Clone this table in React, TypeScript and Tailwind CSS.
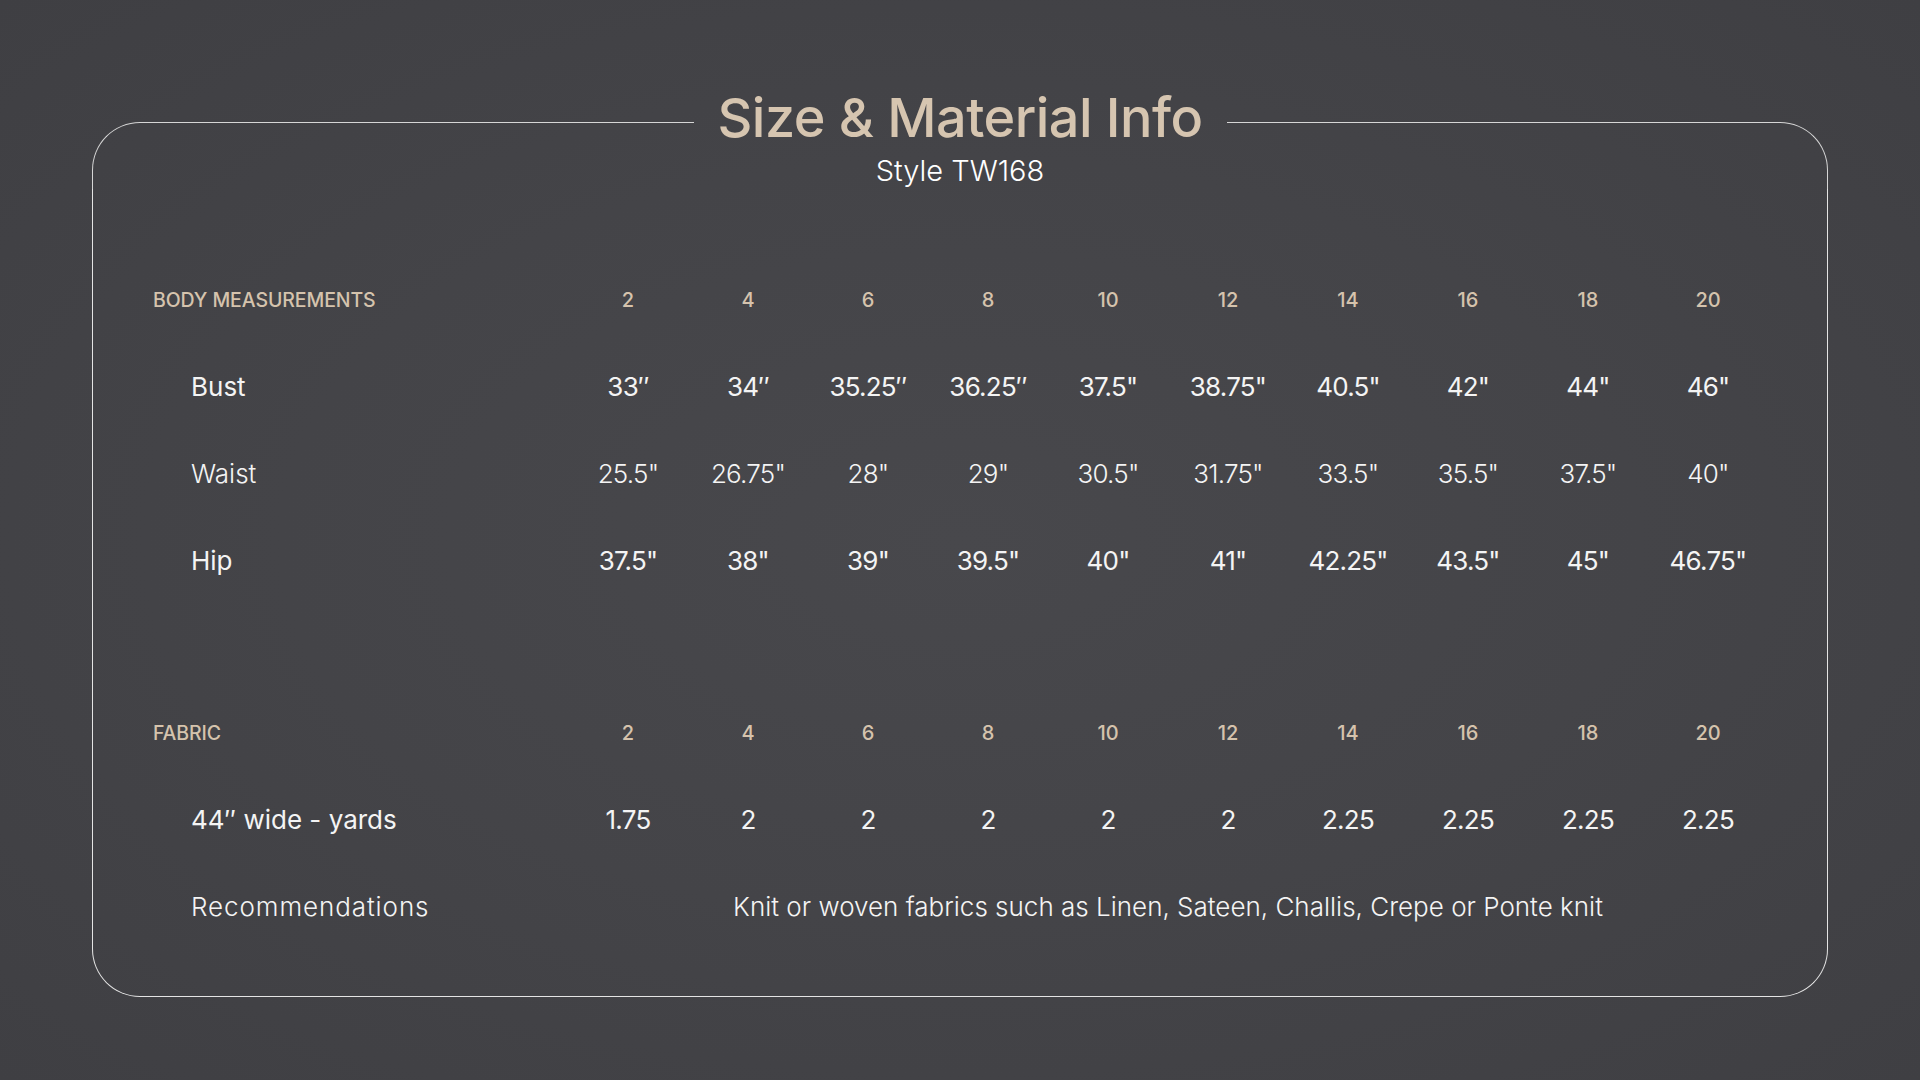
const sizes = ["2", "4", "6", "8", "10", "12", "14", "16", "18", "20"];

const bodyRows = [
  {
    label: "Bust",
    weight: "font-normal",
    values: ["33″", "34″", "35.25″", "36.25″", '37.5"', '38.75"', '40.5"', '42"', '44"', '46"'],
  },
  {
    label: "Waist",
    weight: "font-light",
    values: ['25.5"', '26.75"', '28"', '29"', '30.5"', '31.75"', '33.5"', '35.5"', '37.5"', '40"'],
  },
  {
    label: "Hip",
    weight: "font-normal",
    values: ['37.5"', '38"', '39"', '39.5"', '40"', '41"', '42.25"', '43.5"', '45"', '46.75"'],
  },
];

const yards = ["1.75", "2", "2", "2", "2", "2", "2.25", "2.25", "2.25", "2.25"];

function HeaderRow({ title }: { title: string }) {
  return (
    <>
      <div className="flex h-[86.6px] items-center text-[19.5px] font-medium uppercase tracking-[-0.005em] text-[#d5c3ad]">
        {title}
      </div>
      {sizes.map((s) => (
        <div
          key={s}
          className="flex h-[86.6px] items-center justify-center text-[20px] font-medium text-[#d5c3ad]"
        >
          {s}
        </div>
      ))}
    </>
  );
}

function ValueRow({ label, values, weight }: { label: string; values: string[]; weight: string }) {
  return (
    <>
      <div className={`flex h-[86.6px] items-center pl-[38px] text-[26px] text-[#f4f4f4] ${weight}`}>
        {label}
      </div>
      {values.map((v, i) => (
        <div
          key={i}
          className={`flex h-[86.6px] items-center justify-center text-[26px] tracking-[-0.03em] text-[#f4f4f4] ${weight}`}
        >
          {v}
        </div>
      ))}
    </>
  );
}

export default function App() {
  return (
    <div
      className="h-[1080px] w-full overflow-hidden bg-[radial-gradient(ellipse_at_center,#48484c_0%,#444448_50%,#3f3f43_100%)] pt-[122px]"
      style={{ fontFamily: "Inter, 'Noto Sans', sans-serif" }}
    >
      <div className="mx-[92px] flex h-[875px] flex-col">
        <div className="flex">
          <div className="flex-1 rounded-tl-[48px] border-l-[1.5px] border-t-[1.5px] border-[#d6d6d6]" />
          <div className="flex flex-col items-center px-[24px]">
            <h1 className="-mt-[36px] text-[54px] font-medium leading-[64px] tracking-[-0.01em] text-[#d6c5b0]">
              Size &amp; Material Info
            </h1>
            <p className="mt-[3px] text-[29px] font-light leading-[36px] text-white">Style TW168</p>
          </div>
          <div className="flex-1 rounded-tr-[48px] border-r-[1.5px] border-t-[1.5px] border-[#d6d6d6]" />
        </div>

        <div className="flex-1 rounded-b-[48px] border-x-[1.5px] border-b-[1.5px] border-[#e4e4e4] pl-[60px] pt-[68px]">
          <div className="grid grid-cols-[415px_repeat(10,120px)]">
            <HeaderRow title="Body Measurements" />
            {bodyRows.map((r) => (
              <ValueRow key={r.label} label={r.label} values={r.values} weight={r.weight} />
            ))}
            <div className="col-span-11 h-[86.6px]" />
            <HeaderRow title="Fabric" />
            <ValueRow label="44″ wide - yards" values={yards} weight="font-normal" />
            <div className="flex h-[86.6px] items-center pl-[38px] text-[26px] font-light tracking-[0.035em] text-[#f4f4f4]">
              Recommendations
            </div>
            <div className="col-span-10 flex h-[86.6px] items-center justify-center text-[26px] font-light text-[#f4f4f4]">
              Knit or woven fabrics such as Linen, Sateen, Challis, Crepe or Ponte knit
            </div>
          </div>
        </div>
      </div>
    </div>
  );
}
